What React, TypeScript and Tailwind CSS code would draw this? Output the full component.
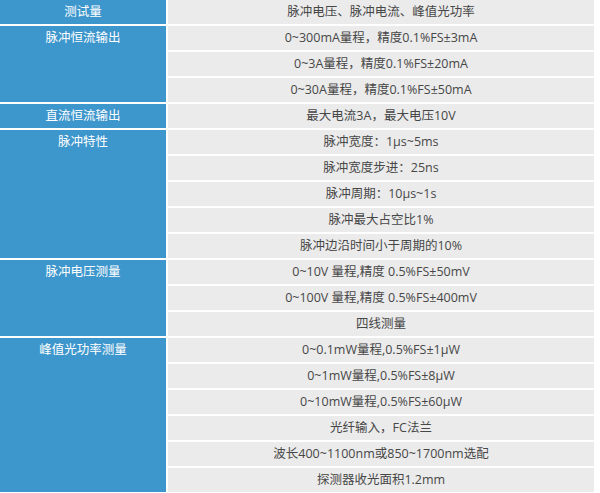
const groups: { label: string; rows: string[] }[] = [
    { label: "测试量", rows: ["脉冲电压、脉冲电流、峰值光功率"] },
    {
        label: "脉冲恒流输出",
        rows: [
            "0~300mA量程，精度0.1%FS±3mA",
            "0~3A量程，精度0.1%FS±20mA",
            "0~30A量程，精度0.1%FS±50mA",
        ],
    },
    { label: "直流恒流输出", rows: ["最大电流3A，最大电压10V"] },
    {
        label: "脉冲特性",
        rows: [
            "脉冲宽度：1μs~5ms",
            "脉冲宽度步进：25ns",
            "脉冲周期：10μs~1s",
            "脉冲最大占空比1%",
            "脉冲边沿时间小于周期的10%",
        ],
    },
    {
        label: "脉冲电压测量",
        rows: ["0~10V 量程,精度 0.5%FS±50mV", "0~100V 量程,精度 0.5%FS±400mV", "四线测量"],
    },
    {
        label: "峰值光功率测量",
        rows: [
            "0~0.1mW量程,0.5%FS±1μW",
            "0~1mW量程,0.5%FS±8μW",
            "0~10mW量程,0.5%FS±60μW",
            "光纤输入，FC法兰",
            "波长400~1100nm或850~1700nm选配",
            "探测器收光面积1.2mm",
        ],
    },
];

export default function App() {
    return (
        <div className="w-[600px] h-[493px] bg-white overflow-hidden font-['Open_Sans','Noto_Sans_CJK_SC',sans-serif] text-[12.5px] leading-[24px]">
            <div className="flex w-[594px] flex-col gap-[2px]">
                {groups.map((g) => (
                    <div key={g.label} className="flex gap-[2px]">
                        <div className="w-[166px] shrink-0 bg-[#3d96cc] text-center text-white">{g.label}</div>
                        <div className="flex flex-1 flex-col gap-[2px]">
                            {g.rows.map((r) => (
                                <div key={r} className="h-[24px] bg-[#ebebeb] text-center text-[#474747]">
                                    {r}
                                </div>
                            ))}
                        </div>
                    </div>
                ))}
            </div>
        </div>
    );
}
